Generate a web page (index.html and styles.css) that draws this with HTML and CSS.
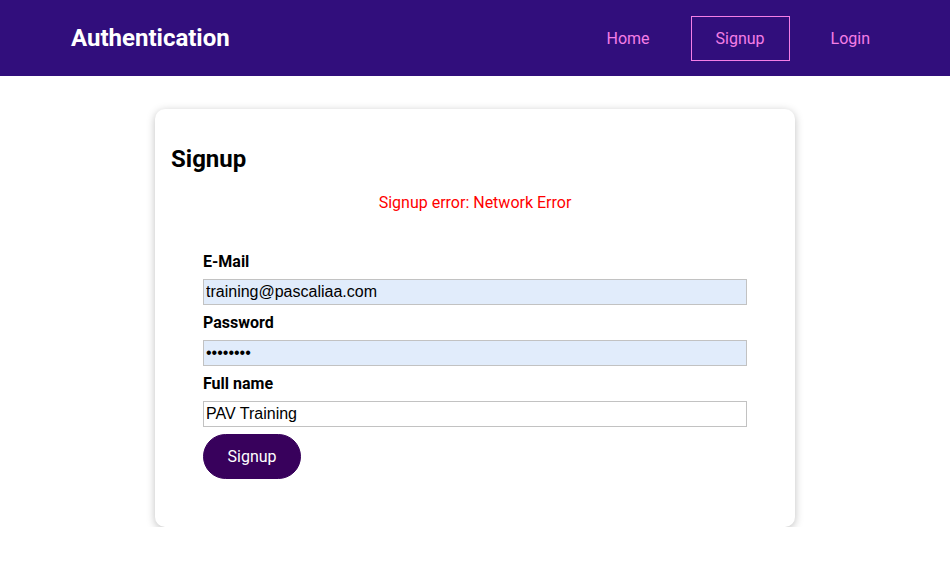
FILE: index.html
```html
<!DOCTYPE html>
<html lang="en">
<head>
<meta charset="utf-8">
<title>Authentication</title>
<link rel="stylesheet" href="styles.css">
</head>
<body>
<header class="header">
  <div class="logo">Authentication</div>
  <nav>
    <ul class="nav-list">
      <li><a class="nav-link" href="#">Home</a></li>
      <li><a class="nav-link active" href="#">Signup</a></li>
      <li><a class="nav-link" href="#">Login</a></li>
    </ul>
  </nav>
</header>
<main class="main">
  <section class="card">
    <h2 class="card-title">Signup</h2>
    <p class="error">Signup error: Network Error</p>
    <form class="form">
      <div class="control">
        <label class="label" for="email">E-Mail</label>
        <input class="input autofill" id="email" type="email" value="training@pascaliaa.com">
      </div>
      <div class="control">
        <label class="label" for="password">Password</label>
        <input class="input autofill" id="password" type="password" value="pavtrain">
      </div>
      <div class="control">
        <label class="label" for="name">Full name</label>
        <input class="input" id="name" type="text" value="PAV Training">
      </div>
      <div class="actions">
        <button class="btn" type="button">Signup</button>
      </div>
    </form>
  </section>
</main>
</body>
</html>
```
FILE: styles.css
```css
* {
  box-sizing: border-box;
}

body {
  margin: 0;
  font-family: Roboto, "Liberation Sans", sans-serif;
  background: #ffffff;
  color: #000000;
}

.header {
  height: 76px;
  background: #310e7c;
  display: flex;
  align-items: center;
  justify-content: space-between;
  padding: 0 55px 0 71px;
}

.logo {
  color: #ffffff;
  font-size: 24px;
  font-weight: 700;
}

.nav-list {
  list-style: none;
  margin: 0;
  padding: 0;
  display: flex;
  align-items: center;
  gap: 16px;
}

.nav-link {
  display: flex;
  align-items: center;
  height: 45px;
  padding: 0 24px;
  border: 1px solid transparent;
  color: #f47ee6;
  text-decoration: none;
  font-size: 16px;
}

.nav-link.active {
  border-color: #f47ee6;
}

.main {
  padding-top: 33px;
}

.card {
  width: 640px;
  margin: 0 auto;
  padding: 16px;
  background: #ffffff;
  border-radius: 10px;
  box-shadow: 0 2px 8px rgba(0, 0, 0, 0.25);
}

.card-title {
  margin: 20px 0;
  font-size: 24px;
  font-weight: 700;
}

.error {
  margin: 0;
  text-align: center;
  color: #ff0000;
  font-size: 16px;
}

.form {
  padding: 40px 32px 32px;
}

.control {
  margin-bottom: 8px;
}

.label {
  display: block;
  margin-bottom: 8px;
  font-weight: 700;
  font-size: 16px;
}

.input {
  display: block;
  width: 100%;
  height: 26px;
  margin: 0;
  padding: 0 2px;
  border: 1px solid #c2c2c2;
  background: #ffffff;
  font-family: "Liberation Sans", Arial, sans-serif;
  font-size: 16px;
  color: #000000;
}

.input.autofill {
  background: #e1ecfb;
}

.actions {
  display: flex;
  margin-top: -1px;
}

.btn {
  height: 45px;
  padding: 0 23.5px;
  border: 1px solid #38015c;
  border-radius: 23px;
  background: #38015c;
  color: #ffffff;
  font-family: Roboto, "Liberation Sans", sans-serif;
  font-size: 16px;
  cursor: pointer;
}
```
